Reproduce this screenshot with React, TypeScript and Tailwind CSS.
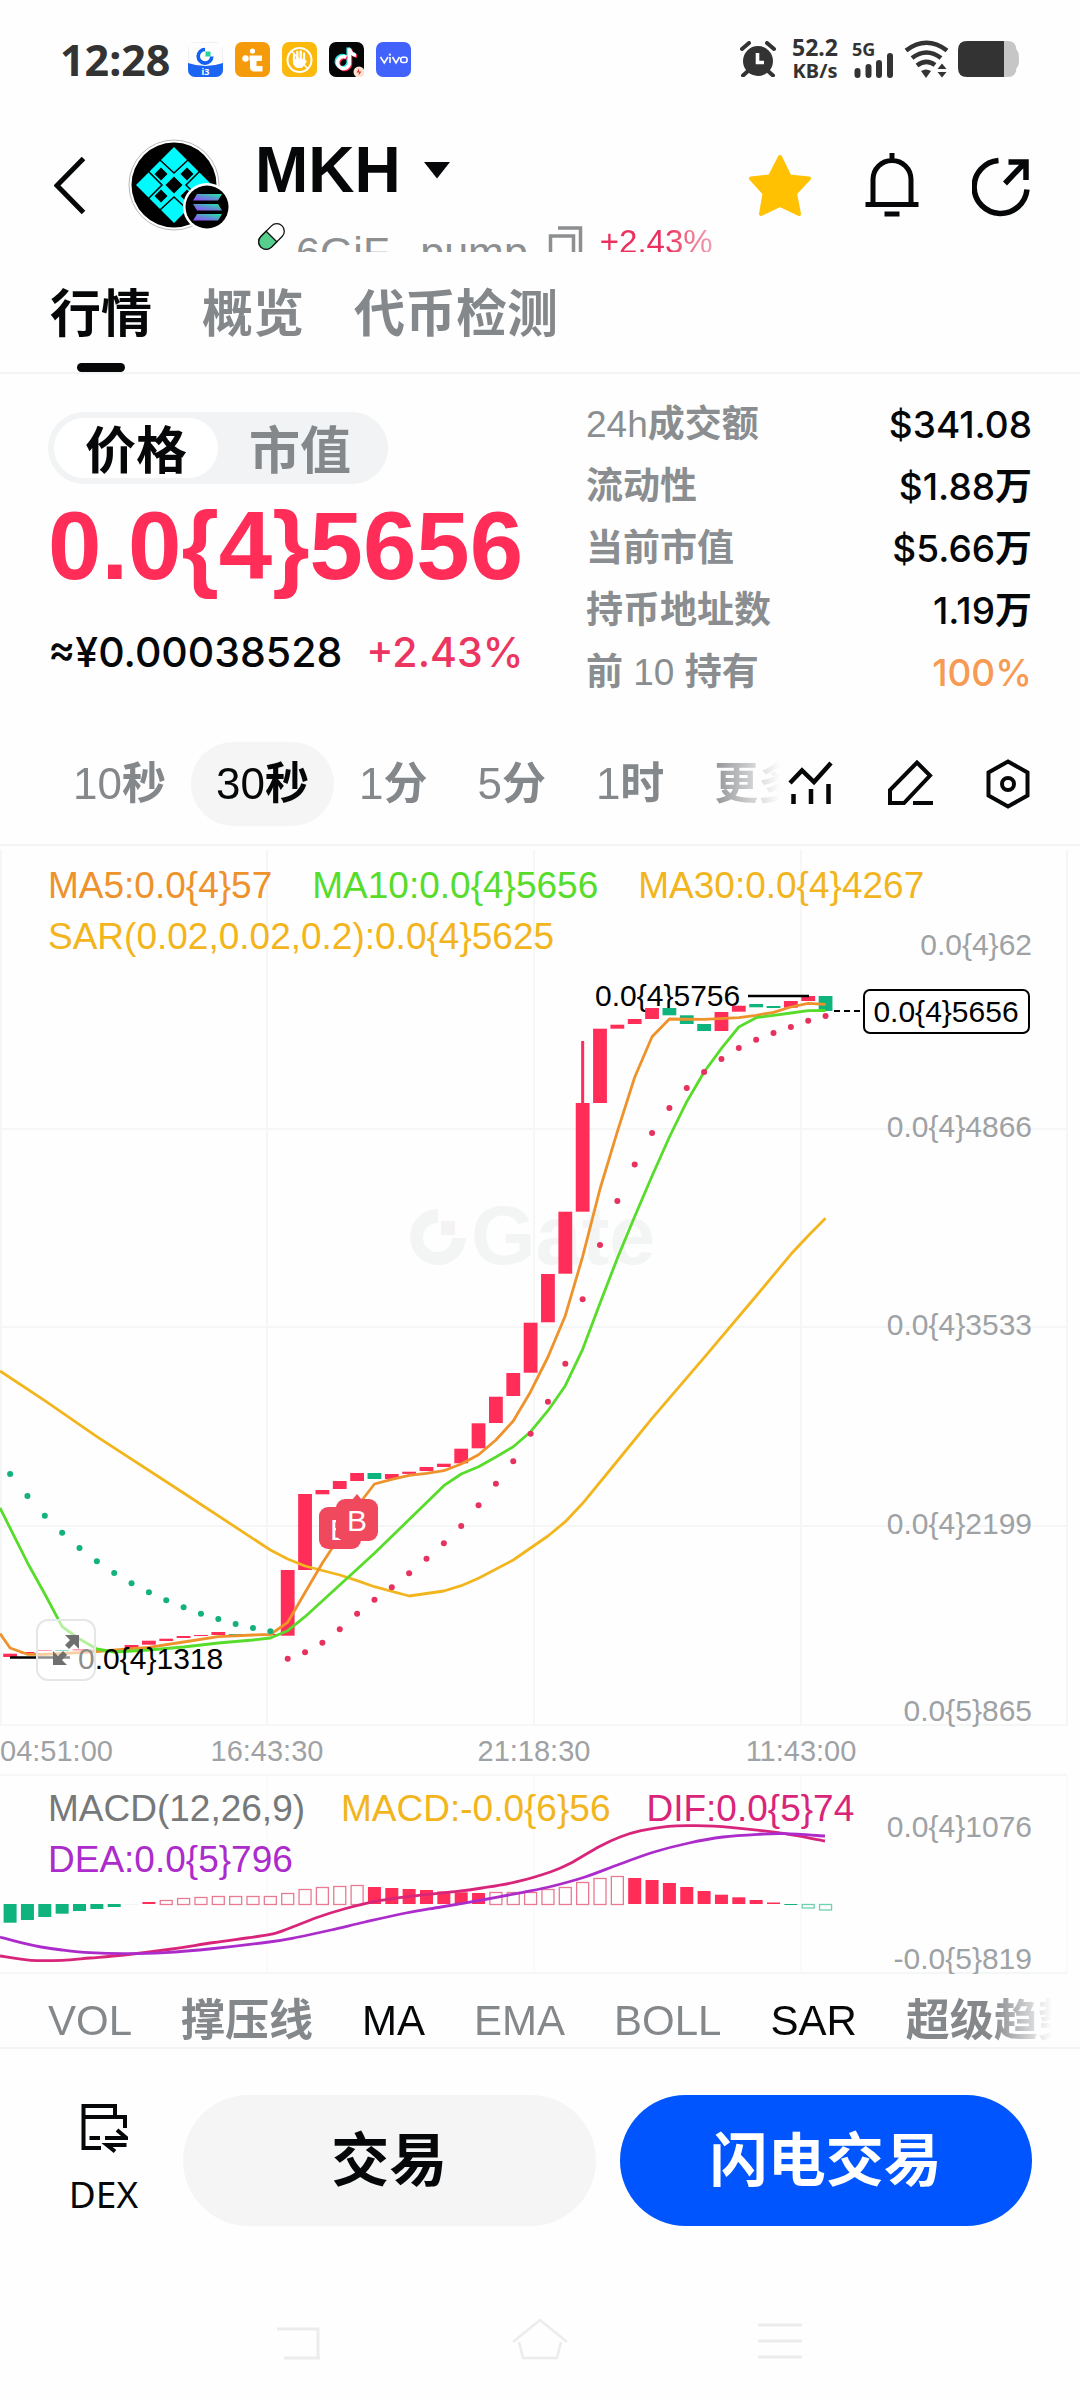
import React from "react";

const LATIN = "font-['Liberation_Sans','Noto_Sans_CJK_SC',sans-serif]";
const MEDIUM = "font-['Inter','Noto_Sans_CJK_SC',sans-serif] font-medium";

const UP = "#ff2d58";
const DOWN = "#0fb37d";

/* Sets Chinese runs in the bold face and leaves digits and Latin as they are. */
function Mixed({ children }: { children: string }) {
  const runs = children.match(/[\u4e00-\u9fff]+|[^\u4e00-\u9fff]+/g) ?? [];
  return (
    <>
      {runs.map((r, i) =>
        /[\u4e00-\u9fff]/.test(r) ? <span key={i} className="font-bold">{r}</span> : <React.Fragment key={i}>{r}</React.Fragment>
      )}
    </>
  );
}

/* ---------- chart data ---------- */

const STEP = 17.35;
const cx = (i: number) => 10.1 + i * STEP;

// [top, bottom, direction]
const candles: [number, number, 1 | 0][] = [
  [1653.7, 1657, 1], [1652, 1653.6, 1], [1650, 1651, 1], [1650, 1651, 0], [1649, 1650.6, 1],
  [1649.6, 1650.6, 1], [1649, 1650.6, 1], [1645, 1648, 1], [1640.7, 1644.7, 1], [1638.7, 1641, 1],
  [1636, 1638, 1], [1635, 1636, 1], [1632, 1635, 1], [1634, 1635.2, 0], [1634, 1635.2, 1],
  [1634, 1635.2, 1], [1570, 1635.7, 1], [1494, 1570, 1], [1490, 1494.3, 1], [1481, 1489, 1],
  [1473, 1481, 1], [1473, 1479, 0], [1474, 1479, 1], [1471.7, 1473.9, 1], [1467, 1471, 1],
  [1463.7, 1467, 1], [1448.7, 1463.3, 1], [1423.3, 1448.3, 1], [1396.7, 1423, 1], [1373, 1396, 1],
  [1322.7, 1372.7, 1], [1274, 1322.3, 1], [1211.7, 1273.7, 1], [1103, 1211.7, 1], [1028.7, 1103, 1],
  [1024.7, 1028.7, 1], [1019, 1024, 1], [1008, 1019, 1], [1008, 1015.3, 0], [1015.3, 1024, 0],
  [1024, 1031, 0], [1012, 1031, 1], [1005.7, 1011.7, 1], [1004, 1007.3, 0], [1006, 1008, 0],
  [1001, 1007.7, 1], [996, 1001, 1], [996, 1011, 0],
];

const sar = [
  1474, 1496, 1515.7, 1532.7, 1548, 1561.3, 1573, 1583.3, 1592.3, 1600.3, 1607.3, 1613.7, 1619,
  1624, 1628, 1631.3, 1658.7, 1652.3, 1642.7, 1629.3, 1613.7, 1599.7, 1587.3, 1573.3, 1558.7,
  1543.3, 1526, 1505.3, 1483.7, 1461.3, 1433.7, 1401.7, 1363.7, 1299.3, 1245, 1201, 1164.5, 1133,
  1108, 1088, 1072, 1059, 1048, 1039.7, 1033, 1027, 1020.7, 1016,
];

type Pt = [number, number];
const line = (pts: Pt[], start?: number) =>
  (start === undefined ? "M" : `M0,${start} L`) + pts.map(([i, y]) => `${cx(i)},${y}`).join(" L");

const ma5 = line([
  [0, 1648], [1, 1654.3], [2, 1654.3], [4, 1652.6], [5, 1651.5], [7, 1648.6], [8, 1647.3], [10, 1642],
  [12, 1636.7], [14, 1635], [15, 1634.5], [16, 1622.3], [17, 1592.5], [18, 1563], [19, 1536.5],
  [20, 1506.5], [21, 1484], [22, 1479.3], [23, 1475.3], [24, 1473.3], [25, 1470.7], [26, 1464],
  [27, 1454.7], [28, 1440], [29, 1421], [30, 1391.7], [31, 1357], [32, 1315.7], [33, 1256.7],
  [34, 1189], [35, 1131.7], [36, 1077.3], [37, 1036.7], [38, 1019], [40, 1019.3], [42, 1017.7],
  [43, 1015.3], [44, 1012.3], [45, 1007], [46, 1003.3], [47, 1004.3],
], 1633.5);

const ma10 = line([
  [1, 1562.7], [2, 1594], [3, 1626.7], [4, 1639], [5, 1649], [6, 1652], [8, 1650], [10, 1647],
  [12, 1643], [14, 1640], [15, 1638], [16, 1630.7], [17, 1616.7], [21, 1553.3], [25, 1485.7],
  [26, 1474], [27, 1466.7], [28, 1457], [29, 1446.7], [30, 1431.7], [31, 1410.7], [32, 1385.7],
  [33, 1349.3], [34, 1303.3], [35, 1258.3], [36, 1216.5], [37, 1176], [38, 1137], [39, 1101.7],
  [40, 1072], [41, 1048.3], [42, 1027], [43, 1017.7], [44, 1015.3], [45, 1013], [46, 1010.7],
  [47, 1010.5],
], 1508);

const ma30 = line([
  [2, 1400.7], [5, 1436.7], [10, 1493], [15, 1550], [16, 1559], [17, 1566], [19, 1575], [20, 1580.7],
  [21, 1586.7], [23, 1596], [25, 1591], [26, 1585.7], [27, 1578.3], [29, 1560], [30, 1548],
  [31, 1536], [32, 1521.7], [33, 1503.3], [35, 1461], [37, 1418.3], [40, 1357.7], [43, 1296],
  [45, 1254.3], [46, 1235.7], [47, 1218.3],
], 1371);

// [tip, style]: f = filled, h = hollow
const ZERO = 1904;
const macd: [number, "f" | "h"][] = [
  [1922.7, "f"], [1920, "f"], [1917, "f"], [1913.7, "f"], [1911, "f"], [1909, "f"], [1907, "f"],
  [1904, "f"], [1902, "f"], [1900, "h"], [1898, "h"], [1897, "h"], [1896, "h"], [1896, "h"],
  [1896, "h"], [1896, "h"], [1893, "h"], [1889, "h"], [1887, "h"], [1886, "h"], [1885, "h"],
  [1887, "f"], [1888, "f"], [1889, "f"], [1890, "f"], [1891.5, "f"], [1892.3, "f"], [1893, "f"],
  [1892, "h"], [1892, "h"], [1892, "h"], [1889, "h"], [1887, "h"], [1882, "h"], [1878, "h"],
  [1876, "h"], [1878, "f"], [1880, "f"], [1883, "f"], [1887, "f"], [1891, "f"], [1894.7, "f"],
  [1897.3, "f"], [1900, "f"], [1902.5, "f"], [1905, "f"], [1907.5, "h"], [1909.5, "h"],
];

const smooth = (pts: Pt[]) => {
  let d = `M${pts[0][0]},${pts[0][1]}`;
  for (let i = 0; i < pts.length - 1; i++) {
    const p0 = pts[Math.max(0, i - 1)];
    const p1 = pts[i];
    const p2 = pts[i + 1];
    const p3 = pts[Math.min(pts.length - 1, i + 2)];
    d += ` C${p1[0] + (p2[0] - p0[0]) / 6},${p1[1] + (p2[1] - p0[1]) / 6} ${p2[0] - (p3[0] - p1[0]) / 6},${p2[1] - (p3[1] - p1[1]) / 6} ${p2[0]},${p2[1]}`;
  }
  return d;
};

const dif = smooth([
  [0, 1956], [31, 1960.3], [62, 1960.3], [90, 1958], [124, 1955], [172, 1949], [214, 1942.5],
  [269, 1934.7], [288, 1928.7], [317, 1917.5], [344, 1909], [379, 1900.7], [413, 1896], [455, 1891.7],
  [482, 1888], [517, 1881.7], [551, 1871.7], [570, 1863.5], [599, 1846.7], [620, 1837], [641, 1830.7],
  [668, 1826.3], [696, 1825.7], [730, 1827.3], [778, 1832.7], [825, 1841],
]);
const dea = smooth([
  [0, 1937], [21, 1942.7], [41, 1947], [62, 1950], [90, 1952.7], [124, 1953.7], [165, 1952.7],
  [214, 1948.5], [269, 1942], [296, 1937.5], [331, 1930], [365, 1922], [406, 1913], [441, 1907],
  [482, 1900], [523, 1892.3], [551, 1886.5], [585, 1877], [620, 1864], [654, 1852], [689, 1843],
  [723, 1837], [758, 1834.3], [785, 1833.7], [825, 1836],
]);

const axis: [string, number][] = [
  ["0.0{4}62", 955], ["0.0{4}4866", 1137], ["0.0{4}3533", 1335], ["0.0{4}2199", 1534],
  ["0.0{5}865", 1721], ["0.0{4}1076", 1837], ["-0.0{5}819", 1969],
];

function Chart() {
  return (
    <svg viewBox="0 846 1080 1128" className={`block w-full ${LATIN}`} role="img" aria-label="K线图">
      <g stroke="#f5f6f6" strokeWidth="2" fill="none">
        {[1, 267, 534, 801, 1067].map((x) => (
          <path key={x} d={`M${x} 850V1725`} />
        ))}
        {[267, 534, 801, 1067].map((x) => (
          <path key={x} d={`M${x} 1776V1973`} stroke="#fafafa" />
        ))}
        {[1129, 1327, 1526, 1725, 1775, 1973].map((y) => (
          <path key={y} d={`M0 ${y}H1067`} />
        ))}
      </g>

      {/* watermark */}
      <g fill="#f3f5f5">
        <path d="M438 1209 A28 28 0 1 0 466 1238 H452 A14.500 14.500 0 1 1 438 1223 Z" />
        <rect x="441" y="1221" width="14" height="14" fill="#f5f2f3" />
        <text x="471" y="1264" fontSize="83" fontWeight="700">Gate</text>
      </g>

      <g fill="#9fa2a5" fontSize="30" textAnchor="end">
        {axis.map(([t, y]) => (
          <text key={t} x="1032" y={y}>{t}</text>
        ))}
      </g>
      <g fill="#9fa2a5" fontSize="29">
        <text x="0" y="1761">04:51:00</text>
        <g textAnchor="middle">
          <text x="267" y="1761">16:43:30</text>
          <text x="534" y="1761">21:18:30</text>
          <text x="801" y="1761">11:43:00</text>
        </g>
      </g>

      <text x="595" y="1006" fontSize="30" fill="#000">0.0{"{4}"}5756</text>

      {candles.map(([t, b, up], i) => (
        <rect key={i} x={cx(i) - 6.9} y={t} width="13.8" height={b - t} fill={up ? UP : DOWN} />
      ))}
      <path d={`M${cx(33)} 1041V1104`} stroke={UP} strokeWidth="3" />
      <path d="M748 996H809" stroke="#000" strokeWidth="2.500" />
      <path d="M10 1657.500H70" stroke="#000" strokeWidth="2.500" />

      <g fill="none" strokeWidth="2.800" strokeLinejoin="round">
        <path d={ma30} stroke="#f2b51d" />
        <path d={ma5} stroke="#ee922c" />
        <path d={ma10} stroke="#58dc2b" />
      </g>
      {sar.map((y, i) => (
        <circle key={i} cx={cx(i)} cy={y} r="3" fill={i < 16 ? "#14b07e" : "#e6325f"} />
      ))}

      {/* buy markers */}
      <rect x="319" y="1507" width="42" height="42" rx="9" fill="#f0485d" />
      <text x="330" y="1540" fontSize="30" fill="#fff">B</text>
      <path d="M352 1500L357 1494L362 1500Z" fill="#f0485d" />
      <rect x="336" y="1499" width="42" height="42" rx="9" fill="#f0485d" />
      <text x="357" y="1531" fontSize="30" textAnchor="middle" fill="#fff">B</text>

      <text x="78" y="1669" fontSize="30" fill="#000">0.0{"{4}"}1318</text>

      {/* current price tag */}
      <path d="M834 1011H863" stroke="#000" strokeWidth="2" strokeDasharray="6 4" />
      <rect x="864" y="990" width="165" height="43" rx="6" fill="#fff" stroke="#000" strokeWidth="2" />
      <text x="946" y="1022" fontSize="30" textAnchor="middle" fill="#000">0.0{"{4}"}5656</text>

      {/* MACD */}
      {macd.map(([tip, kind], i) => {
        const down = tip > ZERO;
        const top = Math.min(tip, ZERO);
        const h = Math.max(Math.abs(tip - ZERO), 1);
        const color = down ? DOWN : UP;
        return kind === "f" ? (
          <rect key={i} x={cx(i) - 6.5} y={top} width="13" height={h} fill={i === 7 ? "#f3f3f3" : color} />
        ) : (
          <rect key={i} x={cx(i) - 6} y={top + 0.5} width="12" height={h} fill="none" stroke={down ? "#6fcfae" : "#e87a92"} strokeWidth="1.300" />
        );
      })}
      <g fill="none" strokeWidth="2.800">
        <path d={dif} stroke="#d8257a" />
        <path d={dea} stroke="#ac2ccb" />
      </g>
    </svg>
  );
}

/* ---------- status bar ---------- */

function StatusBar() {
  return (
    <div className="flex h-[118px] items-center justify-between px-[60px] text-[#333] font-['Noto_Sans',sans-serif] font-bold">
      <div className="flex items-center gap-3">
        <span className="mr-1.5 text-[43px] leading-none">12:28</span>
        <svg width="35" height="35" viewBox="0 0 35 35">
          <defs><clipPath id="app"><rect width="35" height="35" rx="7" /></clipPath></defs>
          <g clipPath="url(#app)">
            <rect width="35" height="35" fill="#fdfdfd" stroke="#e4e4e4" />
            <path d="M0 21Q17.500 27 35 21V35H0Z" fill="#1c64f2" />
            <path d="M17 7.500A6.800 6.800 0 1 0 23.800 14.500" fill="none" stroke="#1460f0" strokeWidth="3.600" />
            <rect x="17.500" y="9.500" width="5" height="5" fill="#25d39b" />
          </g>
          <text x="17.500" y="33" fontSize="9" textAnchor="middle" fill="#fff">i3</text>
        </svg>
        <svg width="35" height="35" viewBox="0 0 35 35">
          <rect width="35" height="35" rx="7" fill="#f59b0b" />
          <circle cx="10.500" cy="16.500" r="3.200" fill="#fff" />
          <circle cx="17.500" cy="9" r="2.600" fill="#fff" />
          <path d="M14.500 13.500H27V19H21.500V24H27.500V29.500H19.500Q15 29.500 15 25V19H14.500Z" fill="#fff" />
        </svg>
        <svg width="35" height="35" viewBox="0 0 35 35">
          <rect width="35" height="35" rx="7" fill="#fbb90d" />
          <circle cx="17.500" cy="18" r="12" fill="none" stroke="#fff" strokeWidth="2" />
          <path d="M12 12.500V19M15.300 10V18M18.700 9.500V18M22 11.500V20M12 21L14 24H20L23.500 19.500" stroke="#fff" strokeWidth="2.300" strokeLinecap="round" strokeLinejoin="round" fill="none" />
          <path d="M12 17H22V22L20 26H15L12 22Z" fill="#fff" />
          <path d="M9.500 9L26 27" stroke="#fff" strokeWidth="1.500" />
        </svg>
        <svg width="35" height="35" viewBox="0 0 35 35">
          <rect width="35" height="35" rx="7" fill="#050505" />
          <g fill="none" strokeWidth="3.600">
            <path d="M17.300 15.200A6 6 0 1 0 20.400 21.800V6.500Q21.500 12.500 27 13.300" stroke="#25e5e5" transform="translate(-1.200 -1)" />
            <path d="M17.300 15.200A6 6 0 1 0 20.400 21.800V6.500Q21.500 12.500 27 13.300" stroke="#fb2c55" transform="translate(1 1)" />
            <path d="M17.300 15.200A6 6 0 1 0 20.400 21.800V6.500Q21.500 12.500 27 13.300" stroke="#fff" />
          </g>
          <circle cx="30" cy="30" r="5.500" fill="#fbe3d3" />
          <path d="M30 26.500L27.500 30.500H30L29.500 33.500L32.500 29.500H30Z" fill="#e0342e" />
        </svg>
        <svg width="35" height="35" viewBox="0 0 35 35">
          <rect width="35" height="35" rx="7" fill="#4263fb" />
          <g fill="none" stroke="#fff" strokeWidth="1.600">
            <path d="M4.500 15L8.300 21L12 15M14 15V21M16.500 15L20 21L23.500 15" />
            <circle cx="13.900" cy="12.600" r=".4" />
            <rect x="24.800" y="15.300" width="6.200" height="5.200" rx="2" />
          </g>
        </svg>
      </div>
      <div className="flex items-center">
        <svg width="36" height="36" viewBox="0 0 36 36" className="mr-4">
          <circle cx="18" cy="20" r="15" fill="#333" />
          <path d="M2 8L9 2M34 8L27 2M3 34.500L8 30M33 34.500L28 30" stroke="#333" strokeWidth="4" strokeLinecap="round" />
          <path d="M17.500 12V21.500H24" stroke="#fff" strokeWidth="3.600" fill="none" />
        </svg>
        <div className="mr-3.5 text-center leading-[23px]">
          <div className="text-[23px]">52.2</div>
          <div className="text-[20px]">KB/s</div>
        </div>
        <svg width="44" height="40" viewBox="0 0 44 40" className="mr-2">
          <text x="0" y="17" fontSize="18" fill="#333">5G</text>
          <path d="M5.500 32V36M16.500 28V36M27 24V36M38 17V36" stroke="#333" strokeWidth="6" strokeLinecap="round" />
        </svg>
        <svg width="46" height="38" viewBox="0 0 46 38" className="mr-2">
          <g fill="none" stroke="#333" strokeWidth="4.600">
            <path d="M2 10.500Q22.500 -5 43 10.500" />
            <path d="M8 18Q22.500 7 37 18" />
            <path d="M13 25.500Q22.500 18.500 31 25" />
          </g>
          <path d="M17 31Q22 28 27 31L22 38Z" fill="#333" />
          <path d="M33.500 29L38 23.500L42.500 29ZM33.500 32L38 37.500L42.500 32Z" fill="#333" />
        </svg>
        <svg width="62" height="36" viewBox="0 0 62 36">
          <path d="M46 0H50Q58 0 58.500 9Q61 10 61 18T58.500 27Q58 36 50 36H46Z" fill="#c6c6c6" />
          <path d="M9 0H46V36H9Q0 36 0 27V9Q0 0 9 0Z" fill="#333" />
        </svg>
      </div>
    </div>
  );
}

/* ---------- header ---------- */

function TokenLogo() {
  const dia = (x: number, y: number, r: number, fill: string) => (
    <path d={`M${x} ${y - r}L${x + r} ${y}L${x} ${y + r}L${x - r} ${y}Z`} fill={fill} />
  );
  return (
    <svg width="104" height="96" viewBox="0 0 104 96" className="ml-[42px] block shrink-0">
      <defs>
        <linearGradient id="sol" x1="0" y1="1" x2="1" y2="0">
          <stop offset="0" stopColor="#9945ff" />
          <stop offset=".5" stopColor="#5f8fd0" />
          <stop offset="1" stopColor="#19f0a0" />
        </linearGradient>
      </defs>
      <circle cx="46" cy="48" r="45" fill="#fff" stroke="#b9b9b9" strokeWidth="1" />
      <circle cx="46" cy="48" r="42.500" fill="#000" />
      {dia(46, 48, 38, "#00fbff")}
      {dia(46, 48, 8.5, "#000")}
      {dia(33, 37, 6.5, "#000")}
      {dia(59, 37, 6.5, "#000")}
      {dia(33, 59, 6.5, "#000")}
      {dia(59, 59, 6.5, "#000")}
      <path d="M32 23L46 36L60 23M20 34L34 48L20 62M72 34L58 48L72 62M32 73L46 60L60 73" fill="none" stroke="#000" strokeWidth="1.500" />
      <circle cx="79" cy="70" r="24" fill="#fff" />
      <circle cx="79" cy="70" r="21.500" fill="#000" />
      <g fill="url(#sol)">
        <path d="M69 57H94L90 63.500H65Z" />
        <path d="M65 67H90L94 73.500H69Z" />
        <path d="M69 77H94L90 83.500H65Z" />
      </g>
    </svg>
  );
}

function Header() {
  return (
    <header className="flex h-[134px] items-center overflow-hidden pr-[50px] pl-[54px]">
      <button type="button" aria-label="返回" className="shrink-0">
        <svg width="32" height="60" viewBox="0 0 32 60" className="block">
          <path d="M29.500 3.500L3 30.500L29.500 57.500" fill="none" stroke="#050708" strokeWidth="5" />
        </svg>
      </button>
      <TokenLogo />
      <div className={`ml-[23px] h-full min-w-0 flex-1 pt-5 ${LATIN}`}>
        <button type="button" className="flex items-center gap-[22px] text-[64px] leading-[64px] font-bold text-[#050708]">
          MKH
          <svg width="28" height="18" viewBox="0 0 28 18">
            <path d="M1 1H27L14 17.500Z" fill="#050708" />
          </svg>
        </button>
        <div className="mt-5 flex items-start pl-0.5">
          <svg width="29" height="29" viewBox="0 0 29 29" className="shrink-0">
            <g transform="rotate(45 14.500 14.500)">
              <rect x="7" y="-.5" width="15" height="30" rx="7.500" fill="#fff" stroke="#111" strokeWidth="1.300" />
              <path d="M7 14.500H22V22A7.500 7.500 0 0 1 7 22Z" fill="#57cf8c" stroke="#111" strokeWidth="1.300" />
            </g>
          </svg>
          <span className="ml-2.5 text-[43px] leading-[60px] text-[#8d8f91]">6GiF...pump</span>
          <button type="button" aria-label="复制地址" className="ml-5">
            <svg width="36" height="44" viewBox="0 0 36 44">
              <path d="M10 6H32.500V30M2.500 42V14H25.500V42Z" fill="none" stroke="#8d8f91" strokeWidth="3.500" />
            </svg>
          </button>
          <span className="ml-4 bg-linear-to-r from-[#e9305f] from-60% to-[#eea2b8] bg-clip-text text-[33px] leading-[40px] text-transparent">+2.43%</span>
        </div>
      </div>
      <div className="flex shrink-0 items-center gap-[53px]">
        <button type="button" aria-label="收藏">
          <svg width="64" height="64" viewBox="0 0 64 64" className="block">
            <path d="M32 4L41.500 23.500L61 25.500L47 40.500L51 61L32 52L13 61L16.500 40.500L3 25.500L22 23.500Z" fill="#ffc102" stroke="#ffc102" strokeWidth="4" strokeLinejoin="round" />
          </svg>
        </button>
        <button type="button" aria-label="提醒">
          <svg width="54" height="64" viewBox="0 0 54 64" className="block">
            <path d="M8 51V26.500A19 19 0 0 1 46 26.500V51M.5 51.500H53.500M19.500 61H34.500M27 0V7" fill="none" stroke="#050708" strokeWidth="5" />
          </svg>
        </button>
        <button type="button" aria-label="分享">
          <svg width="58" height="64" viewBox="0 0 58 64" className="block">
            <path d="M26.500 7.500A26.500 26.500 0 1 0 55 36.500M33 30.500L52 10.500M36.500 9H54V27" fill="none" stroke="#050708" strokeWidth="5.500" />
          </svg>
        </button>
      </div>
    </header>
  );
}

const stats: [string, string][] = [
  ["24h成交额", "$341.08"],
  ["流动性", "$1.88万"],
  ["当前市值", "$5.66万"],
  ["持币地址数", "1.19万"],
  ["前 10 持有", "100%"],
];

const frames = ["10秒", "30秒", "1分", "5分", "1时", "更多"];
const indicators: { label: string; cjk?: boolean; on?: boolean }[] = [
  { label: "VOL" },
  { label: "撑压线", cjk: true },
  { label: "MA", on: true },
  { label: "EMA" },
  { label: "BOLL" },
  { label: "SAR", on: true },
  { label: "超级趋势", cjk: true },
];

export default function App() {
  return (
    <main className={`flex min-h-screen w-full flex-col overflow-hidden bg-[#fefefe] text-[#050708] ${LATIN}`}>
      <StatusBar />
      <Header />

      <nav className="flex h-[122px] gap-[50px] border-b-2 border-[#f2f3f3] px-[50px] text-[51px] leading-[114px] font-bold">
        <button type="button" className="relative pt-1.5">
          行情
          <span className="absolute bottom-0 left-1/2 h-[9px] w-12 -translate-x-1/2 rounded-full bg-[#050708]" />
        </button>
        <button type="button" className="pt-1.5 text-[#85888b]">概览</button>
        <button type="button" className="pt-1.5 text-[#85888b]">代币检测</button>
      </nav>

      <section className="flex justify-between px-12 pt-5">
        <div className="pt-[18px]">
          <div className="flex h-[72px] w-[340px] rounded-full bg-[#f1f3f4] p-[6px] text-[51px] leading-[52px] font-bold">
            <button type="button" className="w-[164px] rounded-full bg-white pt-2">价格</button>
            <button type="button" className="flex-1 pt-2 text-[#85888b]">市值</button>
          </div>
          <div className="mt-3.5 text-[96px] leading-[96px] font-bold text-[#ff2d58]">0.0{"{4}"}5656</div>
          <div className={`mt-7 flex gap-6 text-[41px] leading-[60px] ${MEDIUM}`}>
            <span>≈¥0.00038528</span>
            <span className="text-[#ec3560]">+2.43%</span>
          </div>
        </div>
        <dl className="w-[446px] leading-[62px]">
          {stats.map(([k, v], i) => (
            <div key={k} className="flex justify-between">
              <dt className="text-[37px] text-[#8b8e90]"><Mixed>{k}</Mixed></dt>
              <dd className={i === 4 ? `text-[37px] text-[#f79a54] ${MEDIUM}` : `text-[37px] ${MEDIUM}`}>
                <Mixed>{v}</Mixed>
              </dd>
            </div>
          ))}
        </dl>
      </section>

      <div className="mt-[38px] flex items-center border-b-2 border-[#f2f3f3] pr-[50px] pb-[18px] pl-12">
        <div className="flex min-w-0 flex-1 overflow-hidden mask-r-from-90% text-[44px] leading-[84px] whitespace-nowrap text-[#85888b]">
          {frames.map((f) => (
            <button
              key={f}
              type="button"
              className={f === "30秒" ? "shrink-0 rounded-full bg-[#f5f5f5] px-[25px] text-[#050708]" : "shrink-0 px-[25px]"}
            >
              <Mixed>{f}</Mixed>
            </button>
          ))}
        </div>
        <div className="flex shrink-0 items-center gap-[52px] pl-2">
          <button type="button" aria-label="指标">
            <svg width="46" height="52" viewBox="0 0 46 52" className="block">
              <path d="M2 25L14 12.500L26 24L43 5M5.500 46V36M23 46V31M40.500 46V26" fill="none" stroke="#050708" strokeWidth="4.500" />
            </svg>
          </button>
          <button type="button" aria-label="画线">
            <svg width="48" height="52" viewBox="0 0 48 52" className="block">
              <path d="M4 45V32L31 4.500L44 17.500L18 45ZM27 45H47" fill="none" stroke="#050708" strokeWidth="4" />
            </svg>
          </button>
          <button type="button" aria-label="设置">
            <svg width="44" height="52" viewBox="0 0 44 52" className="block">
              <path d="M22 3.500L41.500 14.500V37.500L22 48.500L2.500 37.500V14.500Z" fill="none" stroke="#050708" strokeWidth="4" />
              <circle cx="22" cy="26" r="6" fill="none" stroke="#050708" strokeWidth="4" />
            </svg>
          </button>
        </div>
      </div>

      <section className="relative">
        <Chart />
        <div className="absolute top-[14px] right-12 left-12 flex flex-wrap gap-x-10 text-[37px] leading-[51px]">
          <span className="text-[#ee922c]">MA5:0.0{"{4}"}57</span>
          <span className="text-[#58dc2b]">MA10:0.0{"{4}"}5656</span>
          <span className="text-[#f2b51d]">MA30:0.0{"{4}"}4267</span>
          <span className="text-[#f2b51d]">SAR(0.02,0.02,0.2):0.0{"{4}"}5625</span>
        </div>
        <div className="absolute right-12 bottom-[89px] left-12 flex flex-wrap gap-x-9 text-[37px] leading-[51px]">
          <span className="text-[#76787a]">MACD(12,26,9)</span>
          <span className="text-[#f2b51d]">MACD:-0.0{"{6}"}56</span>
          <span className="text-[#d8257a]">DIF:0.0{"{5}"}74</span>
          <span className="text-[#ac2ccb]">DEA:0.0{"{5}"}796</span>
        </div>
        <button
          type="button"
          aria-label="全屏"
          className="absolute bottom-[293px] left-[36px] flex h-[62px] w-[60px] items-center justify-center rounded-xl border-2 border-[#e6e6e6] bg-white/55"
        >
          <svg width="30" height="32" viewBox="0 0 30 32">
            <path d="M14 1H28V15L23 10L18 15L14 11L19 6ZM16 31H2V17L7 22L12 17L16 21L11 26Z" fill="#6f6f6f" />
          </svg>
        </button>
      </section>

      <div className="border-b-2 border-[#f2f3f3] pr-7 pl-12">
        <div className="flex gap-[49px] overflow-hidden mask-r-from-94% pt-[21px] leading-[52px] whitespace-nowrap text-[#85888b]">
          {indicators.map(({ label, cjk, on }) => (
            <button
              key={label}
              type="button"
              className={cjk ? "shrink-0 text-[44px] font-bold" : on ? "shrink-0 text-[42px] text-[#050708]" : "shrink-0 text-[42px]"}
            >
              {label}
            </button>
          ))}
        </div>
      </div>

      <div className="flex items-center gap-6 px-12 pt-[46px]">
        <a href="#dex" className="flex w-[111px] flex-col items-center gap-3.5 text-[37px] leading-[52px] font-['Noto_Sans',sans-serif]">
          <svg width="48" height="52" viewBox="0 0 48 52" className="shrink-0">
            <path d="M21 46H3.500V4H35V15M3.500 15H45V26M9.500 36H20M25 36H46.500L37 28M46.500 43H27L35 49.500" fill="none" stroke="#050708" strokeWidth="4" />
          </svg>
          DEX
        </a>
        <button type="button" className="h-[131px] flex-1 rounded-full bg-[#f5f5f5] text-[58px] font-bold">交易</button>
        <button type="button" className="h-[131px] flex-1 rounded-full bg-[#0055ff] text-[58px] font-bold text-white">闪电交易</button>
      </div>

      <nav className="flex justify-center gap-[180px] pt-[90px] pb-[32px]" aria-label="系统导航">
        <button type="button" aria-label="后退">
          <svg width="60" height="48" viewBox="0 0 60 48" className="block">
            <path d="M7 13H48V42M14 42H50" fill="none" stroke="#ececec" strokeWidth="3" />
          </svg>
        </button>
        <button type="button" aria-label="主页">
          <svg width="60" height="48" viewBox="0 0 60 48" className="block">
            <path d="M3 26L30 4L57 26M9 26L13 42H47L51 26" fill="none" stroke="#ececec" strokeWidth="2.500" />
          </svg>
        </button>
        <button type="button" aria-label="最近任务">
          <svg width="60" height="48" viewBox="0 0 60 48" className="block">
            <path d="M8 9H52M8 25H52M8 41H52" fill="none" stroke="#ececec" strokeWidth="3" />
          </svg>
        </button>
      </nav>
    </main>
  );
}
